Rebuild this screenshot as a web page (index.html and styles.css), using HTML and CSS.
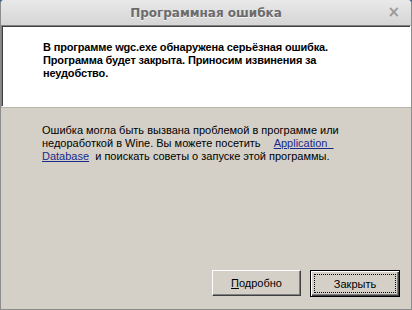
FILE: index.html
```html
<!DOCTYPE html>
<html lang="ru">
<head>
  <meta charset="UTF-8" />
  <meta name="viewport" content="width=device-width, initial-scale=1.0" />
  <title>Программная ошибка</title>
  <link rel="stylesheet" href="styles.css">
</head>
<body>
  <div class="window">
    <div class="titlebar">
      <span class="title">Программная ошибка</span>
      <span class="close">×</span>
    </div>

    <div class="message">
      <div class="line">В программе wgc.exe обнаружена серьёзная ошибка.</div>
      <div class="line">Программа будет закрыта. Приносим извинения за</div>
      <div class="line">неудобство.</div>
    </div>

    <div class="details">
      <div class="line">Ошибка могла быть вызвана проблемой в программе или</div>
      <div class="line">недоработкой в Wine. Вы можете посетить <a class="link gap" href="#">Application&nbsp;&nbsp;</a></div>
      <div class="line"><a class="link" href="#">Database</a>&nbsp; и поискать советы о запуске этой программы.</div>
    </div>

    <div class="buttons">
      <button class="btn"><u>П</u>одробно</button>
      <button class="btn default"><span class="focus">Закрыть</span></button>
    </div>
  </div>
</body>
</html>
```

FILE: styles.css
```css
* {
  box-sizing: border-box;
  margin: 0;
  padding: 0;
}

body {
  background: #3d5f8f;
  width: 412px;
  height: 310px;
  overflow: hidden;
  font-family: 'Liberation Sans', Arial, sans-serif;
}

.window {
  width: 412px;
  height: 310px;
  background: #d4d0c8;
  border: 1px solid #8c8c8c;
  border-top: none;
  border-radius: 4px 4px 0 0;
  display: flex;
  flex-direction: column;
  overflow: hidden;
}

.titlebar {
  height: 25px;
  background: linear-gradient(#e9e9e9, #d5d5d5);
  border-left: 1px solid #777;
  border-right: 1px solid #777;
  margin: 0 -1px;
  display: flex;
  align-items: center;
  justify-content: center;
  position: relative;
}

.title {
  font-family: 'DejaVu Sans', sans-serif;
  font-weight: bold;
  font-size: 12px;
  color: #6b6b6b;
  text-shadow: 0 1px 0 #f4f4f4;
}

.close {
  position: absolute;
  right: 11px;
  top: 3px;
  font-family: 'DejaVu Sans', sans-serif;
  font-weight: bold;
  font-size: 15px;
  color: #9a9a9a;
}

.message {
  height: 82px;
  background: #fff;
  border-top: 1px solid #808080;
  border-left: 1px solid #808080;
  border-bottom: 1px solid #fff;
  border-right: 1px solid #fff;
  box-shadow: inset 1px 1px 0 #404040, 0 1px 0 #b8b4ac;
  padding: 15px 0 0 41px;
  font-weight: bold;
  font-size: 11px;
  line-height: 13px;
  letter-spacing: -0.15px;
  color: #000;
}

.details {
  padding: 17px 0 0 41px;
  font-size: 11px;
  line-height: 13px;
  color: #000;
}

.link {
  color: #1a2a8a;
  text-decoration: underline;
}

.gap {
  margin-left: 10px;
}

.buttons {
  margin-top: auto;
  display: flex;
  justify-content: flex-end;
  gap: 9px;
  padding: 0 11px 12px 0;
}

.btn {
  width: 89px;
  height: 26px;
  background: #d4d0c8;
  font-family: 'Liberation Sans', Arial, sans-serif;
  font-size: 11px;
  color: #000;
  border-top: 1px solid #fff;
  border-left: 1px solid #fff;
  border-right: 1px solid #404040;
  border-bottom: 1px solid #404040;
  box-shadow: inset -1px -1px 0 #808080;
}

.btn.default {
  width: 90px;
  height: 27px;
  border: 1px solid #000;
  box-shadow: inset 1px 1px 0 #fff, inset -1px -1px 0 #404040, inset -2px -2px 0 #808080;
  padding: 3px;
}

.focus {
  display: flex;
  align-items: center;
  justify-content: center;
  height: 100%;
  border: 1px dotted #000;
}
```
